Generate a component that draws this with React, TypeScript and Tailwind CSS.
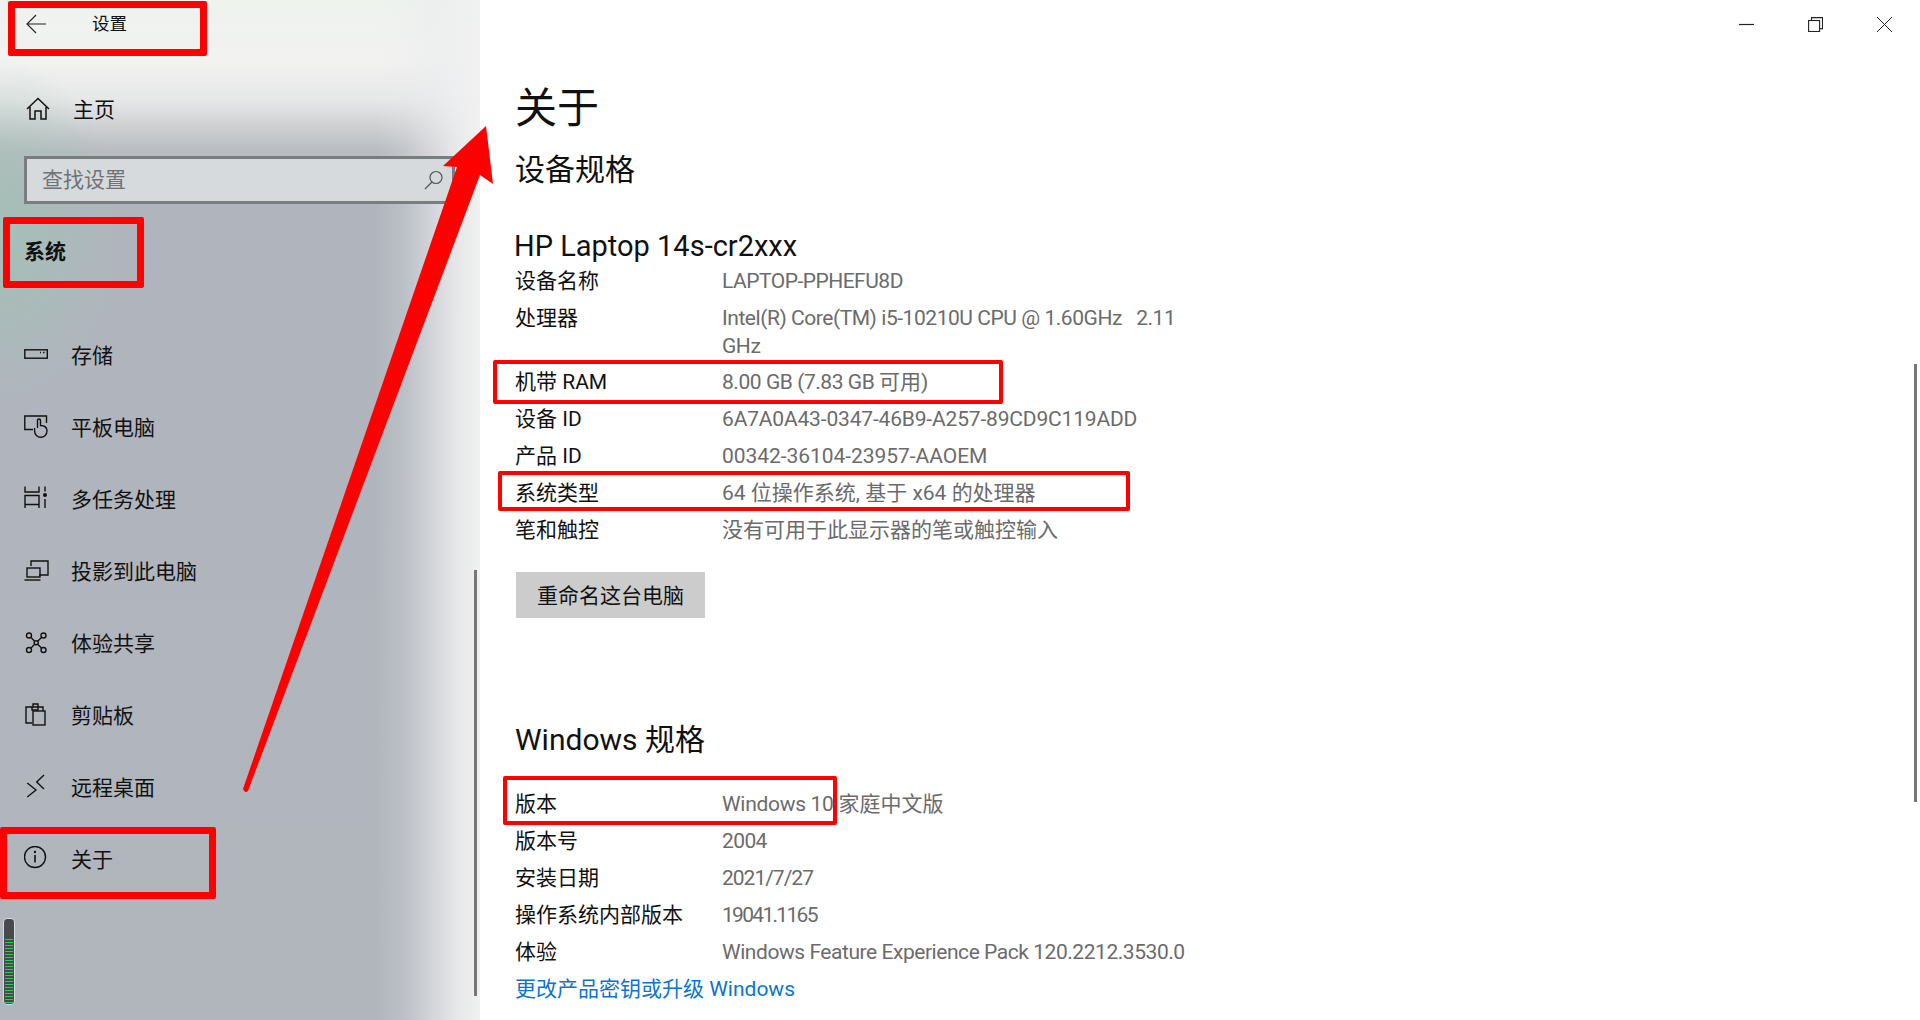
const FONT = "font-['Roboto','Noto_Sans_CJK_SC',sans-serif]";

const navItems = [
  { label: '存储', icon: 'storage' },
  { label: '平板电脑', icon: 'tablet' },
  { label: '多任务处理', icon: 'multi' },
  { label: '投影到此电脑', icon: 'project' },
  { label: '体验共享', icon: 'share' },
  { label: '剪贴板', icon: 'clip' },
  { label: '远程桌面', icon: 'remote' },
  { label: '关于', icon: 'info' },
];

// third field: letter spacing for the latin runs, the original font is narrower than Roboto
const deviceRows = [
  ['设备名称', 'LAPTOP-PPHEFU8D', 'tracking-[-0.5px]'],
  ['处理器', 'Intel(R) Core(TM) i5-10210U CPU @ 1.60GHz   2.11\nGHz', 'tracking-[-0.45px]'],
  ['机带 RAM', '8.00 GB (7.83 GB 可用)', 'tracking-[-0.45px]'],
  ['设备 ID', '6A7A0A43-0347-46B9-A257-89CD9C119ADD', 'tracking-[-0.17px]'],
  ['产品 ID', '00342-36104-23957-AAOEM', 'tracking-[-0.05px]'],
  ['系统类型', '64 位操作系统, 基于 x64 的处理器', 'tracking-[0px]'],
  ['笔和触控', '没有可用于此显示器的笔或触控输入', 'tracking-[0px]'],
];

const windowsRows = [
  ['版本', 'Windows 10 家庭中文版', 'tracking-[-0.3px]'],
  ['版本号', '2004', 'tracking-[-0.6px]'],
  ['安装日期', '2021/7/27', 'tracking-[-1px]'],
  ['操作系统内部版本', '19041.1165', 'tracking-[-1.7px]'],
  ['体验', 'Windows Feature Experience Pack 120.2212.3530.0', 'tracking-[-0.45px]'],
];

function NavIcon({ name }: { name: string }) {
  const p = { fill: 'none', stroke: '#111', strokeWidth: 1.4 };
  return (
    <svg width="26" height="26" viewBox="0 0 26 26" className="shrink-0">
      {name === 'storage' && (
        <g {...p}>
          <rect x=".8" y="7.800" width="22.500" height="8.400" />
          <path d="M16 10.500h1M19 10.500h1.500" />
        </g>
      )}
      {name === 'tablet' && (
        <g {...p}>
          <path d="M9 15.500H.8V2H22.500V9" />
          <path d="M13.500 14V6.500a1.500 1.500 0 0 1 3 0V11.500c4 0 6.500 1.500 6.500 5.500a6.200 6.200 0 0 1-12.400 0v-3" />
        </g>
      )}
      {name === 'multi' && (
        <g {...p}>
          <path d="M1 .5V6h14V.5M1 22V9.500h14V22M1 18.500h14" />
          <path d="M21 .5v5M21 13v9" />
          <circle cx="21" cy="9" r="1.300" fill="#111" />
        </g>
      )}
      {name === 'project' && (
        <g {...p}>
          <path d="M7 8V3h17v14h-9" />
          <rect x="3" y="10" width="13" height="9" />
          <path d="M.5 22h16" />
        </g>
      )}
      {name === 'share' && (
        <g {...p}>
          <circle cx="5" cy="5.500" r="2.500" />
          <circle cx="19.500" cy="5.500" r="2.500" />
          <circle cx="5" cy="20" r="2.500" />
          <circle cx="19.500" cy="20" r="2.500" />
          <circle cx="12.200" cy="12.800" r="2" />
          <path d="M7 7.500l3.700 3.800M17.500 7.500l-3.800 3.800M7 18l3.700-3.800M17.500 18l-3.800-3.800" />
        </g>
      )}
      {name === 'clip' && (
        <g {...p}>
          <path d="M8 21H2V5h6M9 5V2h5v3M14 5h5v4" />
          <rect x="9" y="9" width="12" height="14" />
          <path d="M8 5h6v3H8z" />
        </g>
      )}
      {name === 'remote' && (
        <g {...p}>
          <path d="M3.300 9L12 16l-8.700 7M20 1l-7.300 7L20 15" />
        </g>
      )}
      {name === 'info' && (
        <g {...p}>
          <circle cx="11" cy="11" r="10.500" />
          <path d="M11 9v7.500" strokeWidth="1.600" />
          <circle cx="11" cy="6" r="0.500" fill="#111" />
        </g>
      )}
    </svg>
  );
}

// narrows only the latin parts of a value, CJK keeps its natural width
function Value({ text, tracking }: { text: string; tracking: string }) {
  return (
    <div className="text-[#6b6b6b] whitespace-pre">
      {text.split(/([\u4e00-\u9fff]+)/).map((part, i) => (
        <span key={i} className={i % 2 === 0 ? tracking : ''}>{part}</span>
      ))}
    </div>
  );
}

function SpecRow({ label, value, tracking }: { label: string; value: string; tracking: string }) {
  return (
    <div className="flex min-h-[37px] leading-[28px] py-[4px] items-start">
      <div className="w-[207px] shrink-0 text-[#111]">{label}</div>
      <Value text={value} tracking={tracking} />
    </div>
  );
}

export default function App() {
  return (
    <div className={`relative flex w-[1920px] h-[1020px] overflow-hidden bg-white ${FONT}`}>
      {/* Sidebar */}
      <aside className="relative w-[480px] h-full shrink-0 bg-[linear-gradient(to_left,rgba(241,241,241,1)_0px,rgba(238,239,240,0.85)_25px,rgba(235,236,238,0.55)_50px,rgba(235,236,238,0.2)_75px,rgba(235,236,238,0)_105px),radial-gradient(ellipse_120px_170px_at_0px_230px,rgba(160,195,180,0.75),rgba(160,195,180,0)),linear-gradient(to_bottom,#eef3ee_0px,#f2f2f1_60px,#e6e7e7_100px,#b9bcc1_150px,#b0b5bd_200px,#b1b6bd_1020px)]">
        <div className="h-[48px] flex items-center pl-[26px]">
          <svg width="22" height="22" viewBox="0 0 22 22" fill="none" stroke="#222" strokeWidth="1.100">
            <path d="M2 11h18M10 2l-9 9 9 9" />
          </svg>
          <span className="ml-[44px] text-[17.500px] text-[#111]">设置</span>
        </div>

        <div className="h-[72px] mt-[25px] flex items-center pl-[26px]">
          <svg width="24" height="24" viewBox="0 0 24 24" fill="none" stroke="#111" strokeWidth="1.500">
            <path d="M1 12L12 1.500 23 12M4 10v12h5v-8h6v8h5V10" />
          </svg>
          <span className="ml-[23px] pt-[3px] text-[21px] text-[#111]">主页</span>
        </div>

        <div className="mt-[11px] ml-[24px] w-[431px] h-[48px] border-[3px] border-[#787d7f] bg-[#d6dadc] flex items-center justify-between pl-[15px] pr-[8px]">
          <span className="pt-[1px] text-[21px] text-[#6f7376]">查找设置</span>
          <svg width="20" height="20" viewBox="0 0 20 20" fill="none" stroke="#555" strokeWidth="1.200">
            <circle cx="12" cy="7.500" r="6" />
            <path d="M8 12l-7 7" />
          </svg>
        </div>

        <div className="h-[48px] mt-[24px] flex items-center pl-[24px] pt-[1px] text-[21px] font-bold text-[#111]">系统</div>

        <nav className="mt-[43px] flex flex-col">
          {navItems.map((item) => (
            <div key={item.label} className="h-[72px] flex items-center pl-[24px] gap-[21px]">
              <NavIcon name={item.icon} />
              <span className="pt-[3px] text-[21px] text-[#111]">{item.label}</span>
            </div>
          ))}
        </nav>

        {/* thin scrollbar */}
        <div className="absolute left-[474px] top-[570px] w-[3px] h-[426px] bg-[#777]" />

        {/* green meter */}
        <div className="absolute left-[3px] top-[918px] w-[12px] h-[87px] rounded-[4px] border border-[#d9dcdf] bg-[#46494e] pt-[20px] px-[1px]">
          <div className="h-full bg-[repeating-linear-gradient(to_bottom,#22d04f_0px,#22d04f_1px,transparent_1px,transparent_3px)]" />
        </div>
      </aside>

      {/* Content */}
      <main className="relative flex-1 pl-[35px] text-[21px]">
        <div className="pt-[82px] text-[42px] leading-[54px] text-[#111]">关于</div>
        <div className="mt-[13px] text-[30px] leading-[42px] text-[#111]">设备规格</div>
        <div className="mt-[36px] -ml-[1px] text-[29px] leading-[38px] text-[#111]">HP Laptop 14s-cr2xxx</div>
        <div className="mt-[-2px]">
          {deviceRows.map(([label, value, tracking]) => (
            <SpecRow key={label} label={label} value={value} tracking={tracking} />
          ))}
        </div>
        <div className="mt-[23px] ml-[1px] w-[189px] h-[46px] pt-[4px] bg-[#cccccc] flex items-center justify-center text-[#111]">重命名这台电脑</div>
        <div className="mt-[101px] text-[30px] leading-[42px] text-[#111]">Windows 规格</div>
        <div className="mt-[25px]">
          {windowsRows.map(([label, value, tracking]) => (
            <SpecRow key={label} label={label} value={value} tracking={tracking} />
          ))}
        </div>
        <div className="leading-[37px] text-[#0b74cf]">更改产品密钥或升级 Windows</div>

        {/* window controls */}
        <div className="absolute top-0 right-[1px] flex">
          <div className="w-[69px] h-[49px] flex items-center justify-center">
            <svg width="15" height="15" viewBox="0 0 15 15" stroke="#222" strokeWidth="1.200"><path d="M0 7.500h15" /></svg>
          </div>
          <div className="w-[69px] h-[49px] flex items-center justify-center">
            <svg width="15" height="15" viewBox="0 0 15 15" fill="none" stroke="#222" strokeWidth="1.100"><path d="M3.500 3V.6h11v11H12" /><rect x=".6" y="3.500" width="11" height="11" /></svg>
          </div>
          <div className="w-[69px] h-[49px] flex items-center justify-center">
            <svg width="15" height="15" viewBox="0 0 15 15" stroke="#222" strokeWidth="1"><path d="M0 0l15 15M15 0L0 15" /></svg>
          </div>
        </div>

        {/* page scrollbar */}
        <div className="absolute left-[1434px] top-[364px] w-[3px] h-[438px] bg-[#777]" />
      </main>

      {/* annotation: red boxes drawn over the screenshot */}
      <div className="absolute left-[8px] top-[1px] w-[199px] h-[55px] border-[7px] border-[#ff0000] rounded-[2px]" />
      <div className="absolute left-[3px] top-[217px] w-[141px] h-[71px] border-[7px] border-[#ff0000] rounded-[2px]" />
      <div className="absolute left-[0px] top-[827px] w-[216px] h-[72px] border-[7px] border-[#ff0000] rounded-[2px]" />
      <div className="absolute left-[493px] top-[360px] w-[510px] h-[44px] border-[4px] border-[#ff0000] rounded-[2px]" />
      <div className="absolute left-[498px] top-[471px] w-[632px] h-[40px] border-[4px] border-[#ff0000] rounded-[2px]" />
      <div className="absolute left-[503px] top-[776px] w-[334px] h-[49px] border-[4px] border-[#ff0000] rounded-[2px]" />

      {/* annotation: arrow */}
      <svg className="absolute left-0 top-0 pointer-events-none" width="520" height="820" viewBox="0 0 520 820">
        <path d="M486 126L493 184L480 175L248 791Q245 794 243 789L457 167L443 166Z" fill="#ff0000" />
      </svg>
    </div>
  );
}
